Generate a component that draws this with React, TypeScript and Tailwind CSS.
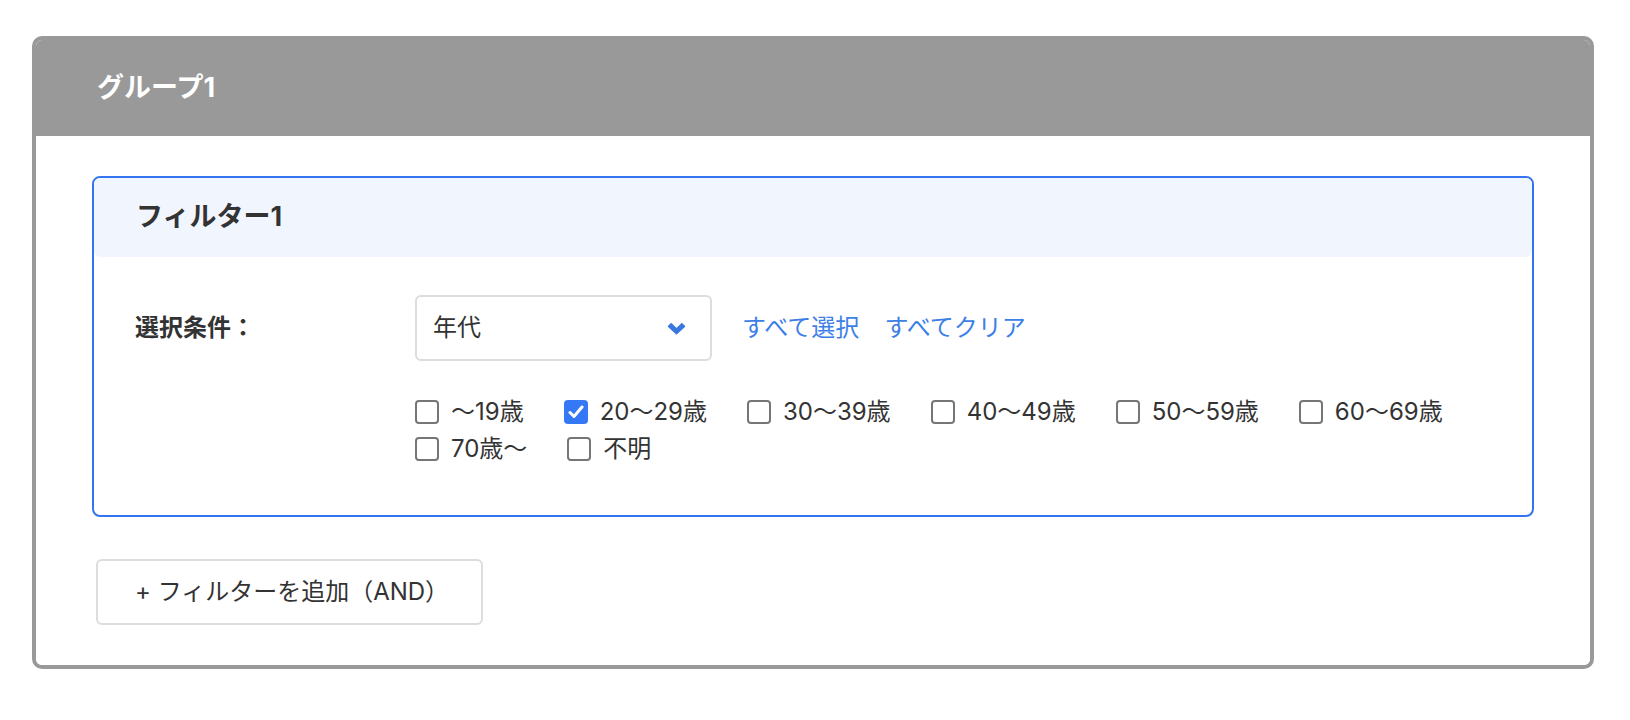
import { useState } from 'react';

const AGES = ['〜19歳', '20〜29歳', '30〜39歳', '40〜49歳', '50〜59歳', '60〜69歳', '70歳〜', '不明'];

function Checkbox({ checked, onChange }: { checked: boolean; onChange: () => void }) {
    return (
        <button
            onClick={onChange}
            className={
                checked
                    ? 'w-[24px] h-[24px] rounded-[4px] bg-[#3478f6] flex items-center justify-center shrink-0'
                    : 'w-[24px] h-[24px] rounded-[4px] border-2 border-[#767676] bg-white shrink-0'
            }
        >
            {checked && (
                <svg width="16" height="14" viewBox="0 0 16 14">
                    <path d="M2 7.5 L6 11.5 L14 2" fill="none" stroke="white" strokeWidth="3" strokeLinecap="round" strokeLinejoin="round" />
                </svg>
            )}
        </button>
    );
}

export default function App() {
    const [selected, setSelected] = useState<string[]>(['20〜29歳']);

    const toggle = (age: string) => {
        setSelected(prev => (prev.includes(age) ? prev.filter(a => a !== age) : [...prev, age]));
    };

    return (
        <div
            className="min-h-screen bg-white pl-[32px] pt-[36px] text-[#333]"
            style={{ fontFamily: 'Inter, "Noto Sans CJK JP", sans-serif' }}
        >
            <div className="w-[1562px] border-4 border-[#999] rounded-[10px] overflow-hidden">
                {/* Group header */}
                <div className="h-[96px] bg-[#999] flex items-center pl-[61px] text-white font-bold text-[27px]">
                    グループ1
                </div>

                <div className="pt-10 px-14 pb-10 bg-white">
                    {/* Filter card */}
                    <div className="border-2 border-[#3574f0] rounded-[8px]">
                        <div className="h-[79px] bg-[#f1f6fe] rounded-[6px] flex items-center pl-[42px] font-bold text-[27px] text-[#333]">
                            フィルター1
                        </div>
                        <div className="pt-[38px] px-[41px] pb-[48px] text-[24px]">
                            <div className="flex">
                                <div className="w-[280px] shrink-0 h-[66px] flex items-center font-bold">選択条件：</div>
                                <div className="flex-1">
                                    <div className="flex items-center">
                                        <div className="w-[297px] h-[66px] border-2 border-[#ddd] rounded-[6px] flex items-center justify-between pl-[16px] pr-[24px]">
                                            <span>年代</span>
                                            <svg width="19" height="13" viewBox="0 0 18 12">
                                                <path d="M1.5 4 L4 1.5 L9 6.5 L14 1.5 L16.5 4 L9 11 Z" fill="#3a78e0" stroke="#3a78e0" strokeWidth="1.5" strokeLinejoin="round" />
                                            </svg>
                                        </div>
                                        <button className="ml-[30px] text-[#3d7fe8]">すべて選択</button>
                                        <button className="ml-[25px] text-[#3d7fe8]">すべてクリア</button>
                                    </div>
                                    <div className="mt-[32px] flex flex-wrap">
                                        {AGES.map(age => (
                                            <label key={age} className="h-[37px] flex items-center mr-[40px] cursor-pointer">
                                                <Checkbox checked={selected.includes(age)} onChange={() => toggle(age)} />
                                                <span className="ml-[12px]">{age}</span>
                                            </label>
                                        ))}
                                    </div>
                                </div>
                            </div>
                        </div>
                    </div>

                    <button className="mt-[42px] ml-1 w-[387px] h-[66px] border-2 border-[#ddd] rounded-[6px] pl-[37px] text-left text-[24px] text-[#333] bg-white">
                        + フィルターを追加（AND）
                    </button>
                </div>
            </div>
        </div>
    );
}
